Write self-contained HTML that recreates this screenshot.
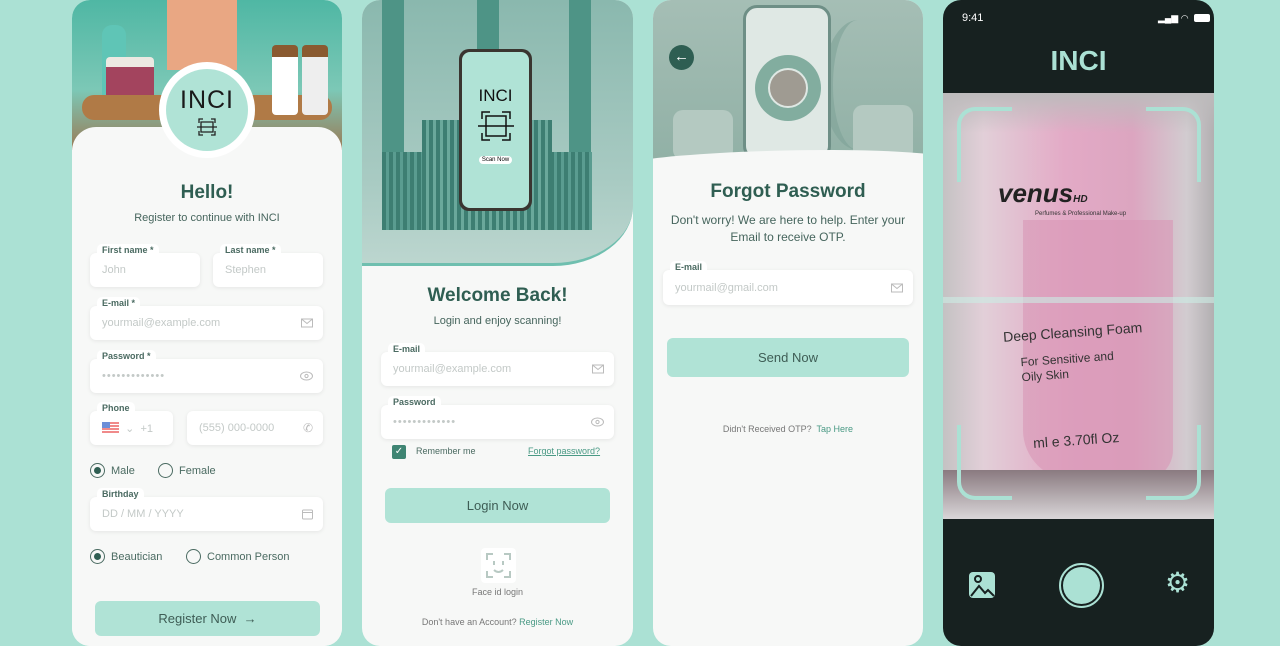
<!DOCTYPE html>
<html><head><meta charset="utf-8"><style>
*{box-sizing:border-box;margin:0;padding:0}
body{width:1280px;height:646px;background:#abe1d4;font-family:"Liberation Sans",sans-serif;position:relative;overflow:hidden}
.ph{position:absolute;top:0;height:646px;border-radius:18px;overflow:hidden;background:#f7f8f7}
.abs{position:absolute}
.in{position:absolute;background:#fff;border-radius:6px;box-shadow:0 1px 4px rgba(0,0,0,.08);font-size:11px;color:#c3c9c7;padding-left:12px;display:flex;align-items:center}
.lb{position:absolute;font-size:9px;font-weight:bold;color:#4b6b62;background:#fff;padding:1px 5px;border-radius:5px 5px 0 0;top:-9px;left:7px}
.ic{position:absolute;right:10px;top:50%;transform:translateY(-50%)}
.t{position:absolute;width:100%;text-align:center}
.h{font-weight:bold;color:#2f5e52;font-size:19px}
.s{color:#46655d;font-size:11px}
.btn{position:absolute;background:#b0e3d6;border-radius:6px;display:flex;align-items:center;justify-content:center;color:#3e5d55;font-size:13px}
.rad{position:absolute;font-size:11px;color:#4b6b62;display:flex;align-items:center;gap:6px}
.rb{width:15px;height:15px;border-radius:50%;border:1.3px solid #4b6b62;display:inline-flex;align-items:center;justify-content:center}
.rb i{width:7px;height:7px;border-radius:50%;background:#2f5e52}
</style></head><body>

<!-- Phone 1 -->
<div class="ph" style="left:72px;width:270px">
 <div class="abs" style="left:0;top:0;width:270px;height:150px;background:linear-gradient(180deg,#4fb7a4 0%,#7cc8b6 60%,#9a7a55 100%)"></div>
 <div class="abs" style="left:30px;top:25px;width:24px;height:80px;background:#5fc5b6;border-radius:10px 10px 4px 4px"></div>
 <div class="abs" style="left:95px;top:0;width:70px;height:70px;background:#e9a783"></div>
 <div class="abs" style="left:34px;top:57px;width:48px;height:55px;background:#a3445e;border-radius:4px;border-top:10px solid #ece9e2"></div>
 <div class="abs" style="left:10px;top:95px;width:250px;height:25px;background:#b07a46;border-radius:12px"></div>
 <div class="abs" style="left:200px;top:45px;width:26px;height:70px;background:#fff;border-radius:4px;border-top:12px solid #8a5a30"></div>
 <div class="abs" style="left:230px;top:45px;width:26px;height:70px;background:#eee;border-radius:4px;border-top:12px solid #8a5a30"></div>
 <div class="abs" style="left:0;top:127px;width:270px;height:540px;background:#f7f8f7;border-radius:24px 24px 0 0"></div>
 <div class="abs" style="left:87px;top:62px;width:96px;height:96px;border-radius:50%;background:#fff"></div>
 <div class="abs" style="left:94px;top:69px;width:82px;height:82px;border-radius:50%;background:#b0e3d6;text-align:center">
  <div style="font-size:25px;color:#1a1a1a;margin-top:17px;letter-spacing:1px">INCI</div>
  <svg width="22" height="20" viewBox="0 0 22 20" style="margin-top:2px"><path d="M3 6V2h4M15 2h4v4M19 14v4h-4M7 18H3v-4M5 5h12v10H5zM1 10h20" fill="none" stroke="#222" stroke-width="1.3"/></svg>
 </div>
 <div class="t h" style="top:182px">Hello!</div>
 <div class="t s" style="top:212px">Register to continue with INCI</div>
 <div class="in" style="left:18px;top:253px;width:110px;height:34px"><span class="lb">First name *</span>John</div>
 <div class="in" style="left:141px;top:253px;width:110px;height:34px"><span class="lb">Last name *</span>Stephen</div>
 <div class="in" style="left:18px;top:306px;width:233px;height:34px"><span class="lb">E-mail *</span>yourmail@example.com<svg class="ic" width="12" height="9"><path d="M.5.5h11v8H.5zM.5.5l5.5 4.5 5.5-4.5" fill="none" stroke="#bbb"/></svg></div>
 <div class="in" style="left:18px;top:359px;width:233px;height:34px;letter-spacing:1px"><span class="lb" style="letter-spacing:0">Password *</span>•••••••••••••<svg class="ic" width="13" height="9"><ellipse cx="6.5" cy="4.5" rx="6" ry="4" fill="none" stroke="#bbb"/><circle cx="6.5" cy="4.5" r="1.6" fill="none" stroke="#bbb"/></svg></div>
 <div class="in" style="left:18px;top:411px;width:83px;height:34px"><span class="lb">Phone</span><span style="display:inline-block;width:17px;height:12px;background:repeating-linear-gradient(#f08a8a 0 2px,#fff 2px 3px);position:relative"><i style="position:absolute;left:0;top:0;width:8px;height:6px;background:#6d8fd8"></i></span>&nbsp;&nbsp;⌄&nbsp;&nbsp;+1</div>
 <div class="in" style="left:115px;top:411px;width:136px;height:34px">(555) 000-0000<span class="ic" style="font-size:12px;color:#bbb">✆</span></div>
 <div class="rad" style="left:18px;top:463px"><span class="rb"><i></i></span>Male</div>
 <div class="rad" style="left:86px;top:463px"><span class="rb"></span>Female</div>
 <div class="in" style="left:18px;top:497px;width:233px;height:34px"><span class="lb">Birthday</span>DD / MM / YYYY<svg class="ic" width="11" height="11"><rect x=".5" y="1.5" width="10" height="9" rx="1" fill="none" stroke="#bbb"/><path d="M.5 4h10" stroke="#bbb"/></svg></div>
 <div class="rad" style="left:18px;top:549px"><span class="rb"><i></i></span>Beautician</div>
 <div class="rad" style="left:114px;top:549px"><span class="rb"></span>Common Person</div>
 <div class="btn" style="left:23px;top:601px;width:225px;height:35px">Register Now&nbsp;&nbsp;→</div>
</div>

<!-- Phone 2 -->
<div class="ph" style="left:362px;width:271px">
 <div class="abs" style="left:0;top:0;width:271px;height:266px;background:linear-gradient(180deg,#8ab8ae,#a9cbc3 70%,#bcd6cf);border-bottom-right-radius:80px 60px;border-bottom:3px solid #6fbfaf"></div>
 <div class="abs" style="left:20px;top:0;width:22px;height:160px;background:#4e9486"></div>
 <div class="abs" style="left:115px;top:0;width:22px;height:50px;background:#4e9486"></div>
 <div class="abs" style="left:207px;top:0;width:22px;height:160px;background:#4e9486"></div>
 <div class="abs" style="left:20px;top:152px;width:210px;height:78px;background:repeating-linear-gradient(90deg,#3d7e72 0 4px,#5a9c90 4px 7px)"></div>
 <div class="abs" style="left:60px;top:120px;width:130px;height:110px;background:repeating-linear-gradient(90deg,#3d7e72 0 4px,#6aa89b 4px 7px)"></div>
 <div class="abs" style="left:97px;top:49px;width:73px;height:162px;background:#3a3530;border-radius:10px;padding:3px">
  <div style="background:#b0e3d6;border-radius:8px;height:100%;text-align:center">
   <div style="font-size:17px;padding-top:34px;color:#111">INCI</div>
   <svg width="38" height="34" viewBox="0 0 38 34" style="margin-top:3px"><path d="M5 10V3h8M25 3h8v7M33 24v7h-8M13 31H5v-7M9 7h20v20H9zM1 17h36" fill="none" stroke="#111" stroke-width="1.5"/></svg>
   <div style="font-size:6px;background:#fff;display:inline-block;padding:1px 3px;border-radius:4px;margin-top:6px">Scan Now</div>
  </div>
 </div>
 <div class="t h" style="top:285px">Welcome Back!</div>
 <div class="t s" style="top:315px">Login and enjoy scanning!</div>
 <div class="in" style="left:19px;top:352px;width:233px;height:34px"><span class="lb">E-mail</span>yourmail@example.com<svg class="ic" width="12" height="9"><path d="M.5.5h11v8H.5zM.5.5l5.5 4.5 5.5-4.5" fill="none" stroke="#bbb"/></svg></div>
 <div class="in" style="left:19px;top:405px;width:233px;height:34px;letter-spacing:1px"><span class="lb" style="letter-spacing:0">Password</span>•••••••••••••<svg class="ic" width="13" height="9"><ellipse cx="6.5" cy="4.5" rx="6" ry="4" fill="none" stroke="#bbb"/><circle cx="6.5" cy="4.5" r="1.6" fill="none" stroke="#bbb"/></svg></div>
 <div class="abs" style="left:30px;top:445px;width:14px;height:14px;background:#3f8573;border-radius:2px;color:#fff;font-size:10px;text-align:center;line-height:14px">✓</div>
 <div class="abs" style="left:54px;top:446px;font-size:9px;color:#4b6b62">Remember me</div>
 <div class="abs" style="left:166px;top:446px;font-size:9px;color:#4a9a85;text-decoration:underline">Forgot password?</div>
 <div class="btn" style="left:23px;top:488px;width:225px;height:35px">Login Now</div>
 <div class="abs" style="left:119px;top:548px;width:35px;height:35px;background:#fff;border-radius:4px"><svg width="35" height="35"><path d="M6 12V6h6M23 6h6v6M29 23v6h-6M12 29H6v-6M13 13v4M22 13v4M13 22q4.5 4 9 0" fill="none" stroke="#b8c9c3" stroke-width="2"/></svg></div>
 <div class="t" style="top:587px;font-size:9px;color:#777">Face id login</div>
 <div class="t" style="top:617px;font-size:9px;color:#777">Don't have an Account? <span style="color:#4a9a85">Register Now</span></div>
</div>

<!-- Phone 3 -->
<div class="ph" style="left:653px;width:270px">
 <div class="abs" style="left:0;top:0;width:270px;height:170px;background:linear-gradient(180deg,#a5beb5,#90b0a5);"></div>
 <div class="abs" style="left:170px;top:20px;width:70px;height:130px;border-radius:50% 0 0 50%;border-left:10px solid #7fa398;opacity:.6"></div>
 <div class="abs" style="left:20px;top:110px;width:60px;height:50px;background:#b4c9c1;border-radius:10px"></div>
 <div class="abs" style="left:200px;top:105px;width:60px;height:55px;background:#b4c9c1;border-radius:10px"></div>
 <div class="abs" style="left:90px;top:5px;width:88px;height:155px;background:#dfe8e4;border:3px solid #6e8f86;border-radius:14px"></div>
 <div class="abs" style="left:102px;top:55px;width:66px;height:66px;border-radius:50%;background:#82ad9f"></div>
 <div class="abs" style="left:115px;top:68px;width:40px;height:40px;border-radius:50%;background:#9f9b92;border:2px solid #dfe8e4"></div>
 <div class="abs" style="left:-60px;top:150px;width:400px;height:80px;background:#f7f8f7;border-radius:60% 40% 0 0 / 25px 20px 0 0"></div>
 <div class="abs" style="left:16px;top:45px;width:25px;height:25px;border-radius:50%;background:#2e5e52;color:#fff;font-size:15px;text-align:center;line-height:24px">←</div>
 <div class="t h" style="top:181px">Forgot Password</div>
 <div class="t s" style="top:212px;font-size:12px;line-height:17px;padding:0 14px">Don't worry! We are here to help. Enter your Email to receive OTP.</div>
 <div class="in" style="left:10px;top:270px;width:250px;height:35px"><span class="lb">E-mail</span>yourmail@gmail.com<svg class="ic" width="12" height="9"><path d="M.5.5h11v8H.5zM.5.5l5.5 4.5 5.5-4.5" fill="none" stroke="#bbb"/></svg></div>
 <div class="btn" style="left:14px;top:338px;width:242px;height:39px">Send Now</div>
 <div class="t" style="top:424px;font-size:9px;color:#777">Didn't Received OTP?&nbsp; <span style="color:#4a9a85">Tap Here</span></div>
</div>

<!-- Phone 4 -->
<div class="ph" style="left:943px;width:271px;background:#172120">
 <div class="abs" style="left:19px;top:12px;font-size:11px;color:#fff">9:41</div>
 <div class="abs" style="left:215px;top:13px;color:#fff;font-size:9px">▂▄▆ ◠</div>
 <div class="abs" style="left:251px;top:14px;width:16px;height:8px;background:#fff;border-radius:2px"></div>
 <div class="t" style="top:45px;font-size:28px;font-weight:bold;color:#abe1d4">INCI</div>
 <div class="abs" style="left:0;top:93px;width:271px;height:426px;background:linear-gradient(90deg,#c4c2c3 0%,#e2cfd8 15%,#e3aac6 45%,#dca5c0 70%,#d2ccd0 90%,#b2afb1 100%)"></div>
 <div class="abs" style="left:0;top:93px;width:271px;height:40px;background:linear-gradient(180deg,#bdbbbc,rgba(0,0,0,0))"></div>
 <div class="abs" style="left:80px;top:220px;width:150px;height:260px;background:#d996b6;opacity:.6;border-radius:0 0 30px 50px"></div>
 <div class="abs" style="left:0;top:470px;width:271px;height:49px;background:linear-gradient(180deg,#8a7a80,#d9d6d8)"></div>
 <div class="abs" style="left:0;top:297px;width:271px;height:6px;background:#ccece4;opacity:.6"></div>
 <div class="abs" style="left:55px;top:178px;font-size:26px;font-weight:bold;font-style:italic;color:#222">venus<span style="font-size:10px">HD</span></div>
 <div class="abs" style="left:92px;top:211px;font-size:6px;color:#333">Perfumes &amp; Professional Make-up</div>
 <div class="abs" style="left:60px;top:324px;font-size:14px;color:#333;transform:rotate(-4deg)">Deep Cleansing Foam</div>
 <div class="abs" style="left:78px;top:352px;font-size:12px;color:#333;line-height:15px;transform:rotate(-4deg)">For Sensitive and<br>Oily Skin</div>
 <div class="abs" style="left:90px;top:432px;font-size:14px;color:#333;transform:rotate(-4deg)">ml e 3.70fl Oz</div>
 <div class="abs" style="left:14px;top:107px;width:55px;height:75px;border-left:4px solid #abe1d4;border-top:4px solid #abe1d4;border-radius:18px 0 0 0"></div>
 <div class="abs" style="left:203px;top:107px;width:55px;height:75px;border-right:4px solid #abe1d4;border-top:4px solid #abe1d4;border-radius:0 18px 0 0"></div>
 <div class="abs" style="left:14px;top:425px;width:55px;height:75px;border-left:4px solid #abe1d4;border-bottom:4px solid #abe1d4;border-radius:0 0 0 18px"></div>
 <div class="abs" style="left:203px;top:425px;width:55px;height:75px;border-right:4px solid #abe1d4;border-bottom:4px solid #abe1d4;border-radius:0 0 18px 0"></div>
 <svg class="abs" style="left:26px;top:572px" width="26" height="26" viewBox="0 0 26 26"><rect x="0" y="0" width="26" height="26" rx="4" fill="#abe1d4"/><path d="M2 24l8-10 6 7 3-3 6 6" fill="none" stroke="#172120" stroke-width="2"/><circle cx="9" cy="7" r="3" fill="none" stroke="#172120" stroke-width="2"/></svg>
 <div class="abs" style="left:116px;top:563px;width:45px;height:45px;border-radius:50%;border:2px solid #abe1d4;padding:2px"><div style="width:100%;height:100%;border-radius:50%;background:#abe1d4"></div></div>
 <div class="abs" style="left:222px;top:569px;font-size:28px;color:#abe1d4;line-height:1">⚙</div>
</div>
</body></html>
